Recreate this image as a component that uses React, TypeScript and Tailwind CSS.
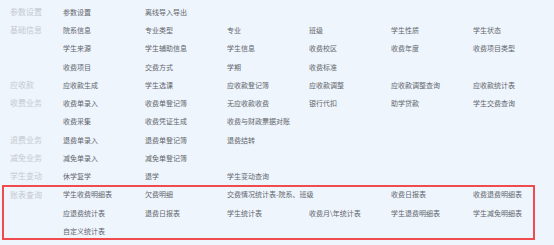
import React from "react";

type Cell = { text: string; span?: number };
type Section = { label: string; rows: Cell[][]; marked?: boolean };

const c = (text: string, span?: number): Cell => ({ text, span });

const sections: Section[] = [
  { label: "参数设置", rows: [[c("参数设置"), c("离线导入导出")]] },
  {
    label: "基础信息",
    rows: [
      [c("院系信息"), c("专业类型"), c("专业"), c("班级"), c("学生性质"), c("学生状态")],
      [c("学生来源"), c("学生辅助信息"), c("学生信息"), c("收费校区"), c("收费年度"), c("收费项目类型")],
      [c("收费项目"), c("交费方式"), c("学期"), c("收费标准")],
    ],
  },
  {
    label: "应收款",
    rows: [[c("应收款生成"), c("学生选课"), c("应收款登记簿"), c("应收款调整"), c("应收款调整查询"), c("应收款统计表")]],
  },
  {
    label: "收费业务",
    rows: [
      [c("收费单录入"), c("收费单登记簿"), c("无应收款收费"), c("银行代扣"), c("助学贷款"), c("学生交费查询")],
      [c("收费采集"), c("收费凭证生成"), c("收费与财政票据对账")],
    ],
  },
  { label: "退费业务", rows: [[c("退费单录入"), c("退费单登记簿"), c("退费结转")]] },
  { label: "减免业务", rows: [[c("减免单录入"), c("减免单登记簿")]] },
  { label: "学生变动", rows: [[c("休学复学"), c("退学"), c("学生变动查询")]] },
  {
    label: "账表查询",
    marked: true,
    rows: [
      [c("学生收费明细表"), c("欠费明细"), c("交费情况统计表-院系、班级", 2), c("收费日报表"), c("收费退费明细表")],
      [c("应退费统计表"), c("退费日报表"), c("学生统计表"), c("收费月\\年统计表"), c("学生退费明细表"), c("学生减免明细表")],
      [c("自定义统计表")],
    ],
  },
];

function MenuSection({ section }: { section: Section }) {
  return (
    <div className="relative flex">
      <div className="w-[53px] shrink-0 h-[18.25px] flex items-center text-[8px] text-[#c5c9d0]">
        {section.label}
      </div>
      <div className="flex flex-col">
        {section.rows.map((row, i) => (
          <div key={i} className="grid grid-cols-[repeat(6,82px)] h-[18.25px] items-center">
            {row.map((cell) => (
              <span
                key={cell.text}
                className={cell.span === 2 ? "col-span-2 whitespace-nowrap" : "whitespace-nowrap"}
              >
                {cell.text}
              </span>
            ))}
          </div>
        ))}
      </div>
      {/* red annotation frame drawn over the report section */}
      {section.marked && (
        <div className="absolute left-[-8px] top-[-1px] w-[533px] h-[55px] border-2 border-[#f04b4f] pointer-events-none" />
      )}
    </div>
  );
}

export default function App() {
  return (
    <div className="w-[554px] h-[245px] bg-[#eef5fd] pl-[10px] pt-[3px] text-[7px] text-[#63666b] overflow-hidden font-['Noto_Sans_CJK_SC','Noto_Sans',sans-serif]">
      {sections.map((s) => (
        <MenuSection key={s.label} section={s} />
      ))}
    </div>
  );
}
